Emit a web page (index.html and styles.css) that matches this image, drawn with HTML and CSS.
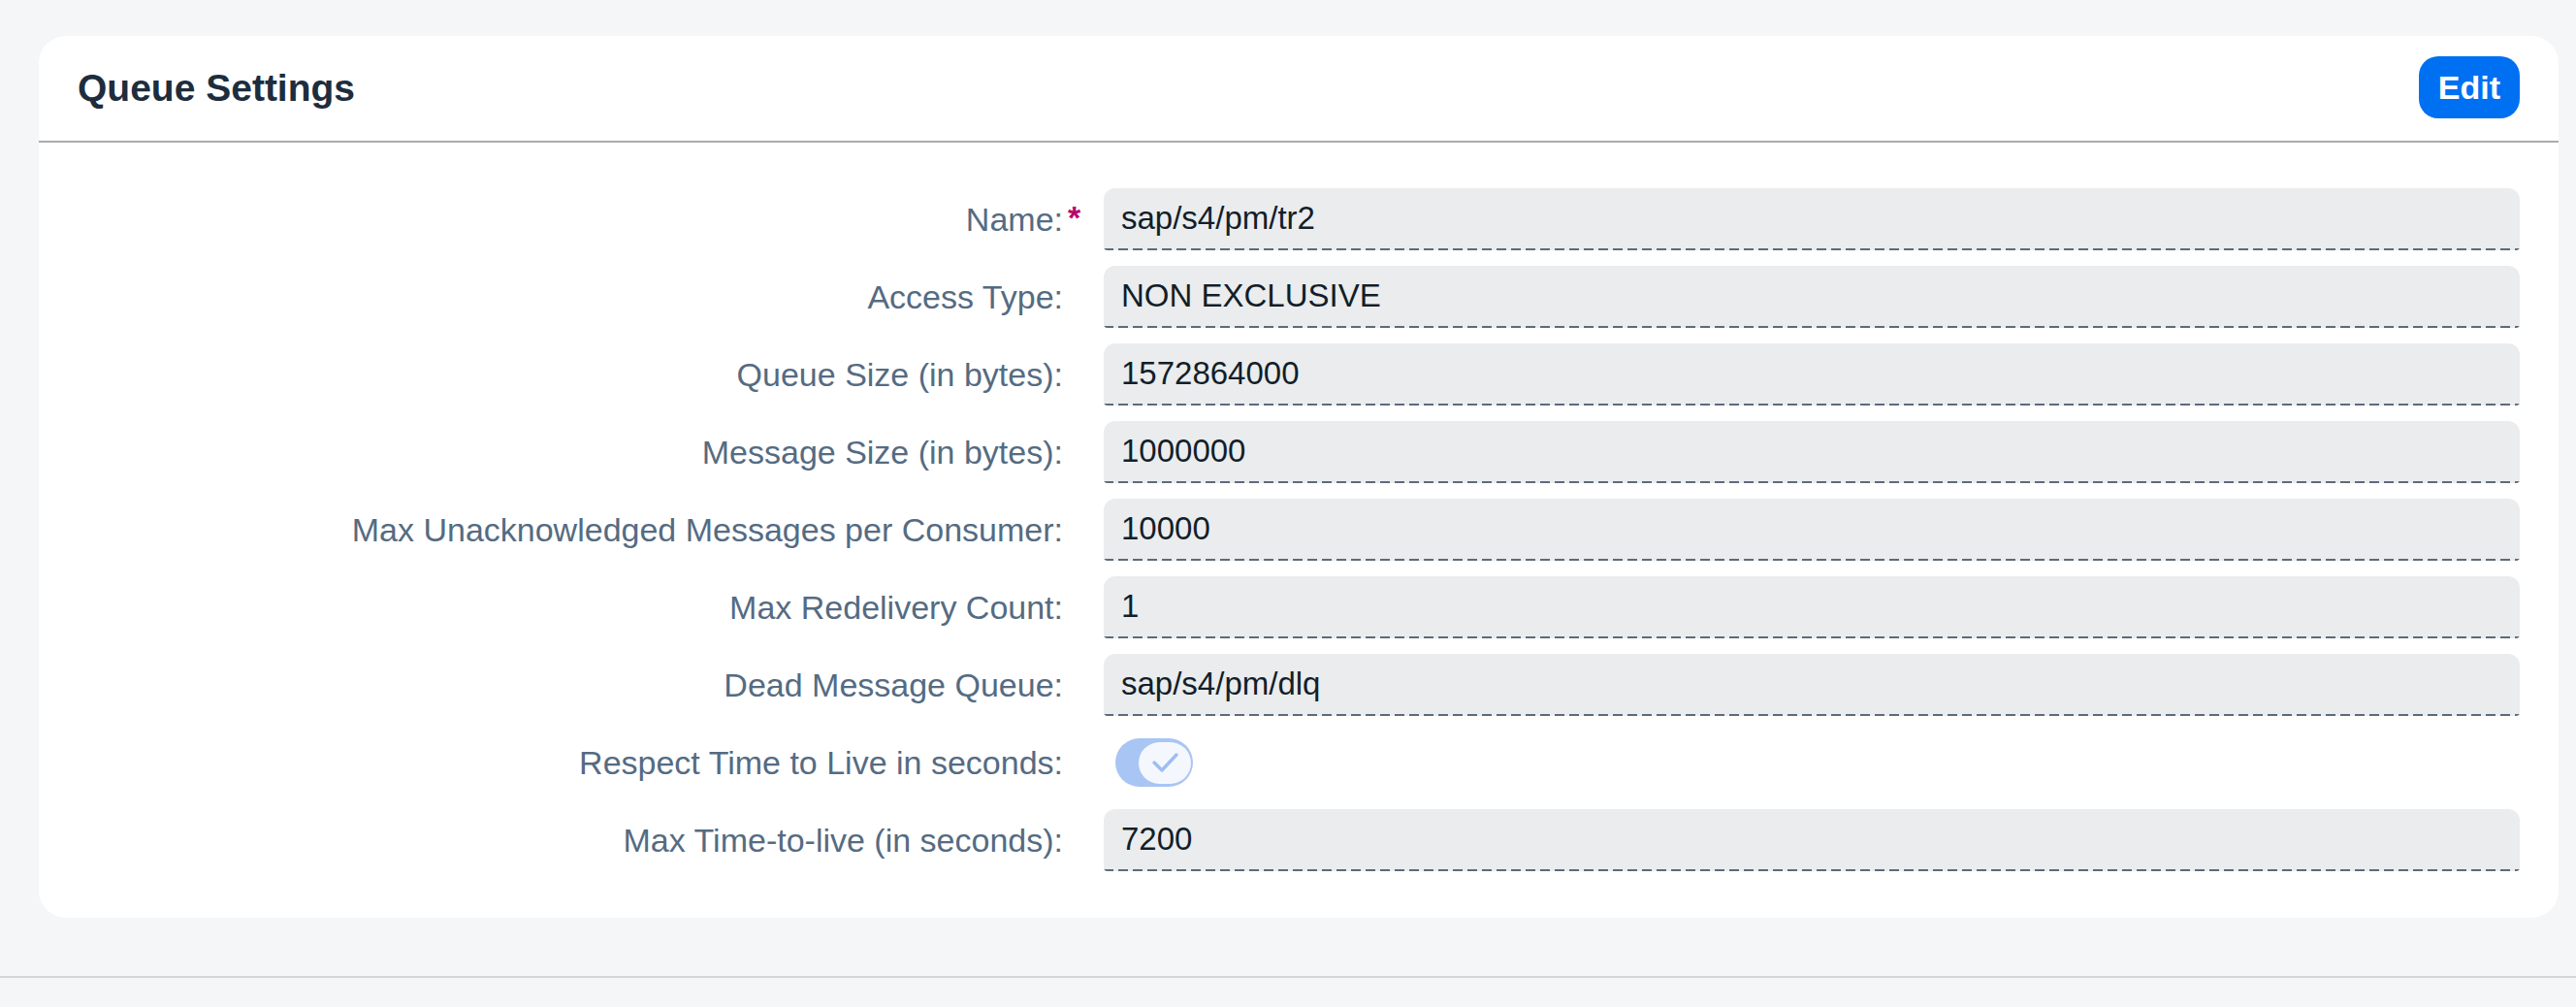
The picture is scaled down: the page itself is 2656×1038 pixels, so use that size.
FILE: index.html
```html
<!DOCTYPE html>
<html lang="en">
<head>
<meta charset="utf-8">
<title>Queue Settings</title>
<link rel="stylesheet" href="styles.css">
</head>
<body>
<div class="page">
  <section class="card">
    <header class="card-header">
      <h2 class="card-title">Queue Settings</h2>
      <button class="btn-edit" type="button">Edit</button>
    </header>
    <div class="form">
      <div class="label">Name:<span class="req">*</span></div>
      <div class="field">sap/s4/pm/tr2</div>

      <div class="label">Access Type:</div>
      <div class="field">NON EXCLUSIVE</div>

      <div class="label">Queue Size (in bytes):</div>
      <div class="field">1572864000</div>

      <div class="label">Message Size (in bytes):</div>
      <div class="field">1000000</div>

      <div class="label">Max Unacknowledged Messages per Consumer:</div>
      <div class="field">10000</div>

      <div class="label">Max Redelivery Count:</div>
      <div class="field">1</div>

      <div class="label">Dead Message Queue:</div>
      <div class="field">sap/s4/pm/dlq</div>

      <div class="label">Respect Time to Live in seconds:</div>
      <div class="switch-cell">
        <div class="switch">
          <div class="switch-knob">
            <svg width="30" height="24" viewBox="0 0 30 24"><path d="M4 12 L12 20 L27 4" fill="none" stroke="#9fbdf1" stroke-width="3.4" stroke-linecap="round" stroke-linejoin="round"/></svg>
          </div>
        </div>
      </div>

      <div class="label">Max Time-to-live (in seconds):</div>
      <div class="field">7200</div>
    </div>
  </section>
</div>
<div class="footer"></div>
</body>
</html>
```

FILE: styles.css
```css
html, body {
  margin: 0;
  padding: 0;
}
body {
  background: #f5f6f7;
  font-family: "Liberation Sans", Arial, sans-serif;
}
.page {
  box-sizing: border-box;
  height: 1006px;
  padding: 37px 18px 0 40px;
}
.card {
  background: #ffffff;
  border-radius: 28px;
}
.card-header {
  box-sizing: border-box;
  height: 110px;
  padding: 0 40px;
  display: flex;
  align-items: center;
  justify-content: space-between;
  border-bottom: 2px solid #a9abae;
}
.card-title {
  margin: 0;
  font-size: 39px;
  font-weight: bold;
  color: #1d2d3e;
}
.btn-edit {
  height: 64px;
  padding: 0 20px;
  border: none;
  border-radius: 20px;
  background: #0070f2;
  color: #ffffff;
  font-family: "Liberation Sans", Arial, sans-serif;
  font-size: 34px;
  font-weight: bold;
  margin-top: -2px;
}
.form {
  display: grid;
  grid-template-columns: 1038px 1fr;
  grid-auto-rows: 64px;
  column-gap: 20px;
  row-gap: 16px;
  padding: 47px 40px 48px;
}
.label {
  display: flex;
  align-items: center;
  justify-content: flex-end;
  padding-right: 22px;
  font-size: 34px;
  color: #556b82;
  white-space: nowrap;
}
.req {
  color: #ba066c;
  font-weight: bold;
  width: 16px;
  margin-left: 5px;
  margin-right: -21px;
  align-self: flex-start;
  margin-top: 13px;
  line-height: 1;
}
.field {
  display: flex;
  align-items: center;
  box-sizing: border-box;
  padding: 0 18px 2px;
  border-radius: 12px 12px 4px 4px;
  background-color: #eaecee;
  background-image: repeating-linear-gradient(to right, #5b6b7c 0 10px, transparent 10px 15px);
  background-position: left bottom;
  background-size: 100% 2px;
  background-repeat: no-repeat;
  font-size: 33px;
  color: #131e29;
}
.switch-cell {
  display: flex;
  align-items: center;
  padding-left: 12px;
}
.switch {
  box-sizing: border-box;
  width: 80px;
  height: 50px;
  border-radius: 25px;
  background: #a9c5f4;
  display: flex;
  align-items: center;
  justify-content: flex-end;
  padding-right: 2px;
}
.switch-knob {
  width: 54px;
  height: 43px;
  border-radius: 22px;
  background: #f4f8fe;
  display: flex;
  align-items: center;
  justify-content: center;
}
.footer {
  border-top: 2px solid #d6d7d9;
  height: 30px;
  background: #f5f6f7;
}
```
